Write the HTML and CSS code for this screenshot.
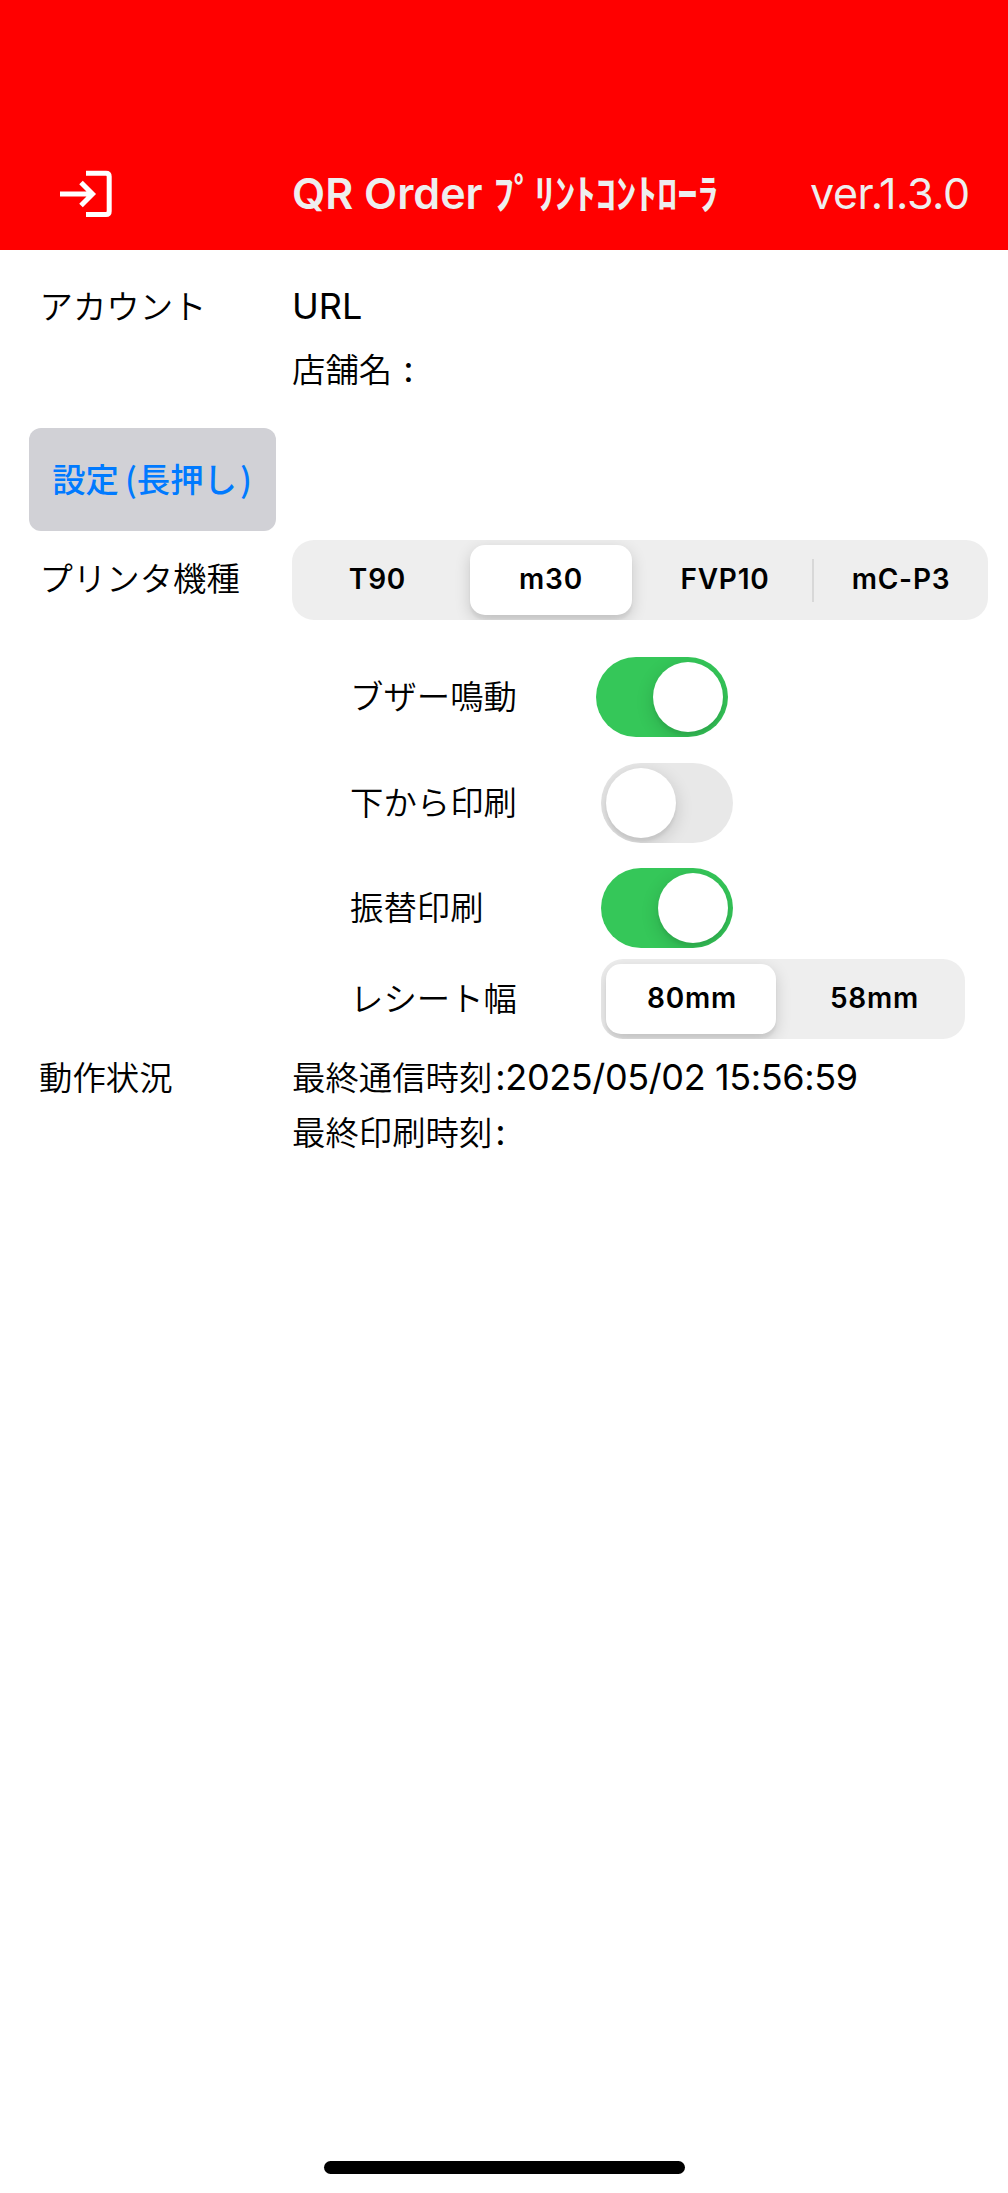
FILE: index.html
```html
<!DOCTYPE html>
<html lang="ja">
<head>
  <meta charset="UTF-8">
  <title>QR Order プリントコントローラ</title>
  <link rel="stylesheet" href="styles.css">
</head>
<body>

  <header class="header">
    <svg class="login-icon" viewBox="0 0 52 48" fill="none" stroke="#fff" stroke-width="5">
      <path d="M0 24H33M21 12.5L32.5 24L21 35.5"/>
      <path d="M26 3.2H46Q49.2 3.2 49.2 6.5V41.2Q49.2 44.5 46 44.5H26"/>
    </svg>
    <h1 class="title">QR Order <span class="kana">ﾌﾟ ﾘﾝﾄｺﾝﾄﾛｰﾗ</span></h1>
    <span class="version">ver.1.3.0</span>
  </header>

  <main class="content">
    <!-- アカウント -->
    <div class="row account">
      <div class="label">アカウント</div>
      <div class="value">
        <div><span class="latin">URL</span></div>
        <div>店舗名<span class="latin colon">:</span></div>
      </div>
    </div>

    <button class="setting">設定<span class="paren">(</span>長押し<span class="paren-end">)</span></button>

    <!-- プリンタ機種 -->
    <div class="row">
      <div class="label printer-label">プリンタ機種</div>
      <div class="segment printer">
        <div class="item">T90</div>
        <div class="item selected">m30</div>
        <div class="item">FVP10</div>
        <div class="item divided">mC-P3</div>
      </div>
    </div>

    <div class="options">
      <div class="option">
        <div class="option-label">ブザー鳴動</div>
        <div class="switch on buzzer"><div class="knob"></div></div>
      </div>
      <div class="option">
        <div class="option-label">下から印刷</div>
        <div class="switch"><div class="knob"></div></div>
      </div>
      <div class="option">
        <div class="option-label">振替印刷</div>
        <div class="switch on"><div class="knob"></div></div>
      </div>
      <div class="option receipt">
        <div class="option-label">レシート幅</div>
        <div class="segment width">
          <div class="item selected">80mm</div>
          <div class="item">58mm</div>
        </div>
      </div>
    </div>

    <!-- 動作状況 -->
    <div class="row status">
      <div class="label">動作状況</div>
      <div class="value">
        <div>最終通信時刻<span class="latin time">:2025/05/02 15:56:59</span></div>
        <div>最終印刷時刻<span class="latin time">:</span></div>
      </div>
    </div>
  </main>

  <div class="home-bar"></div>

</body>
</html>
```

FILE: styles.css
```css
* { box-sizing: border-box; }
body { margin: 0; height: 2193px; display: flex; flex-direction: column; background: #fff; color: #000; font-family: "Noto Sans CJK JP", sans-serif; font-size: 33.4px; font-weight: 350; white-space: nowrap; }

.header { height: 250px; padding: 137px 0 0 60px; display: flex; align-items: center; background: #f00; color: #eee; }
.login-icon { width: 52px; height: 48px; }
.title { margin: 0 0 3px 180px; width: 518px; font-family: Inter, "Noto Sans CJK JP", sans-serif; font-size: 43px; font-weight: 600; line-height: 60px; }
.kana { font-family: "Noto Sans CJK JP", sans-serif; font-size: 40.8px; font-weight: 700; word-spacing: -9px; }
.version { margin-bottom: 1px; font-family: Inter, sans-serif; font-size: 43px; font-weight: 400; line-height: 60px; letter-spacing: -.4px; }

.content { flex: 1; padding-top: 24px; }
.row { display: flex; }
.label { width: 292px; padding-left: 39.5px; }
.latin { font-family: Inter, sans-serif; font-size: 36px; font-weight: 400; }
.account { line-height: 62px; height: 124px; }
.colon { margin-left: 11px; }

.setting { display: flex; align-items: center; justify-content: center; margin: 30px 0 9px 29px; width: 247px; height: 103px; padding: 0 1px 4px 0; border: 0; border-radius: 12px; background: #d1d1d6; color: #007aff; font: 500 33.4px "Noto Sans CJK JP", sans-serif; }
.paren { margin-left: 6px; }
.paren-end { margin-left: 3px; }

.segment { display: flex; height: 80px; padding: 5px; border-radius: 22px; background: #eee; overflow: hidden; font-family: Inter, sans-serif; font-size: 28px; font-weight: 600; line-height: 69px; letter-spacing: .8px; text-align: center; }
.item { flex: 1; }
.selected { background: #fff; border-radius: 15px; box-shadow: 0 5px 16px rgba(0, 0, 0, .16), 0 5px 3px rgba(0, 0, 0, .05); }
.printer { width: 696px; }
.printer .item { flex: 0 0 174px; }
.printer .item:first-child { flex-basis: 161px; margin-right: 12px; }
.printer .selected { flex-basis: 162px; margin-right: 6px; }
.printer .divided { padding-left: 4px; background: linear-gradient(#d8d8d8, #d8d8d8) 0 50% / 2px 43px no-repeat; }
.printer-label { line-height: 74px; }

.options { padding: 37px 0 0 350px; }
.option { display: flex; align-items: center; height: 80px; margin-bottom: 25.5px; }
.option-label { width: 251px; margin-bottom: 5px; }
.switch { width: 132px; height: 80px; padding: 5px; border-radius: 40px; background: #e8e8e8; display: flex; overflow: hidden; }
.switch.on { background: #35c759; justify-content: flex-end; }
.buzzer { margin-left: -5px; }
.knob { width: 70px; height: 70px; border-radius: 50%; background: #fff; box-shadow: 0 5px 18px rgba(0, 0, 0, .16), 0 4px 3px rgba(0, 0, 0, .05); }
.receipt { margin: -15px 0 10px; }
.width { width: 364px; }
.width .selected { flex: 0 0 170px; padding-left: 2px; margin-right: 13px; }

.status { line-height: 54px; }
.status .label { padding-left: 39px; }
.time { margin-left: 3px; letter-spacing: -.38px; }

.home-bar { width: 361px; height: 13px; margin: 0 0 19px 324px; border-radius: 7px; background: #000; }
```
